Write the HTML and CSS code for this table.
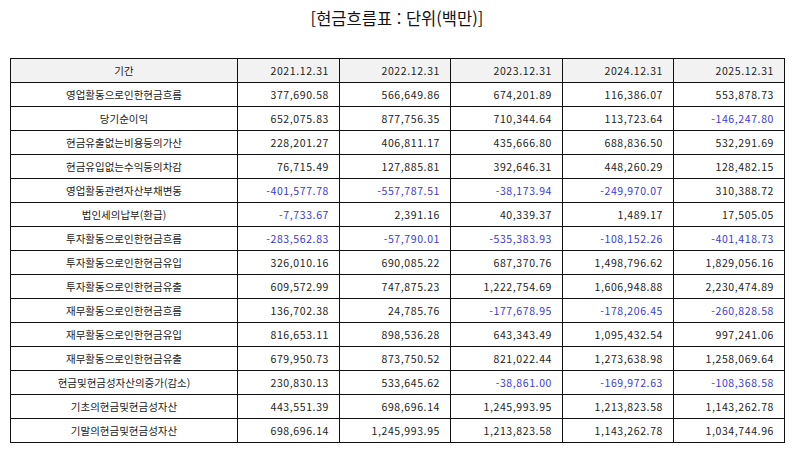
FILE: index.html
```html
<!DOCTYPE html>
<html lang="ko">
<head>
<meta charset="utf-8">
<title>현금흐름표</title>
<link rel="stylesheet" href="styles.css">
</head>
<body>
<div class="page">
  <h1 class="title">[현금흐름표 : 단위(백만)]</h1>
  <table class="cf">
    <colgroup>
      <col class="c-label"><col class="c1"><col class="c2"><col class="c3"><col class="c4"><col class="c5">
    </colgroup>
    <thead>
      <tr><th class="lbl">기간</th><th>2021.12.31</th><th>2022.12.31</th><th>2023.12.31</th><th>2024.12.31</th><th>2025.12.31</th></tr>
    </thead>
    <tbody>
      <tr><td class="lbl">영업활동으로인한현금흐름</td><td>377,690.58</td><td>566,649.86</td><td>674,201.89</td><td>116,386.07</td><td>553,878.73</td></tr>
      <tr><td class="lbl">당기순이익</td><td>652,075.83</td><td>877,756.35</td><td>710,344.64</td><td>113,723.64</td><td class="neg">-146,247.80</td></tr>
      <tr><td class="lbl">현금유출없는비용등의가산</td><td>228,201.27</td><td>406,811.17</td><td>435,666.80</td><td>688,836.50</td><td>532,291.69</td></tr>
      <tr><td class="lbl">현금유입없는수익등의차감</td><td>76,715.49</td><td>127,885.81</td><td>392,646.31</td><td>448,260.29</td><td>128,482.15</td></tr>
      <tr><td class="lbl">영업활동관련자산부채변동</td><td class="neg">-401,577.78</td><td class="neg">-557,787.51</td><td class="neg">-38,173.94</td><td class="neg">-249,970.07</td><td>310,388.72</td></tr>
      <tr><td class="lbl">법인세의납부(환급)</td><td class="neg">-7,733.67</td><td>2,391.16</td><td>40,339.37</td><td>1,489.17</td><td>17,505.05</td></tr>
      <tr><td class="lbl">투자활동으로인한현금흐름</td><td class="neg">-283,562.83</td><td class="neg">-57,790.01</td><td class="neg">-535,383.93</td><td class="neg">-108,152.26</td><td class="neg">-401,418.73</td></tr>
      <tr><td class="lbl">투자활동으로인한현금유입</td><td>326,010.16</td><td>690,085.22</td><td>687,370.76</td><td>1,498,796.62</td><td>1,829,056.16</td></tr>
      <tr><td class="lbl">투자활동으로인한현금유출</td><td>609,572.99</td><td>747,875.23</td><td>1,222,754.69</td><td>1,606,948.88</td><td>2,230,474.89</td></tr>
      <tr><td class="lbl">재무활동으로인한현금흐름</td><td>136,702.38</td><td>24,785.76</td><td class="neg">-177,678.95</td><td class="neg">-178,206.45</td><td class="neg">-260,828.58</td></tr>
      <tr><td class="lbl">재무활동으로인한현금유입</td><td>816,653.11</td><td>898,536.28</td><td>643,343.49</td><td>1,095,432.54</td><td>997,241.06</td></tr>
      <tr><td class="lbl">재무활동으로인한현금유출</td><td>679,950.73</td><td>873,750.52</td><td>821,022.44</td><td>1,273,638.98</td><td>1,258,069.64</td></tr>
      <tr><td class="lbl">현금및현금성자산의증가(감소)</td><td>230,830.13</td><td>533,645.62</td><td class="neg">-38,861.00</td><td class="neg">-169,972.63</td><td class="neg">-108,368.58</td></tr>
      <tr><td class="lbl">기초의현금및현금성자산</td><td>443,551.39</td><td>698,696.14</td><td>1,245,993.95</td><td>1,213,823.58</td><td>1,143,262.78</td></tr>
      <tr><td class="lbl">기말의현금및현금성자산</td><td>698,696.14</td><td>1,245,993.95</td><td>1,213,823.58</td><td>1,143,262.78</td><td>1,034,744.96</td></tr>
    </tbody>
  </table>
</div>
</body>
</html>
```
FILE: styles.css
```css
html, body {
  margin: 0;
  padding: 0;
  background: #ffffff;
}
body {
  font-family: "Noto Sans CJK KR", "Noto Sans", sans-serif;
  color: #222222;
}
.page {
  width: 794px;
  padding: 6px 10px 0 10px;
  box-sizing: border-box;
}
.title {
  margin: 0;
  font-size: 16.5px;
  font-weight: 400;
  line-height: 24px;
  text-align: center;
  color: #111111;
  height: 52px;
}
.cf {
  border-collapse: collapse;
  table-layout: fixed;
  width: 774px;
  font-size: 10.5px;
}
.c-label { width: 227px; }
.c1 { width: 102px; }
.c2 { width: 111px; }
.c3 { width: 112px; }
.c4 { width: 111px; }
.c5 { width: 111px; }
.cf th, .cf td {
  border: 1px solid #111111;
  height: 24px;
  padding: 0 10px 0 4px;
  text-align: right;
  font-weight: 400;
  box-sizing: border-box;
  line-height: 14px;
  white-space: nowrap;
  letter-spacing: 0.6px;
}
.cf th {
  background: #f2f2f2;
}
.cf .lbl {
  text-align: center;
  padding: 0 4px;
  letter-spacing: 0;
}
.cf .neg {
  color: #3a3ad6;
}
```
